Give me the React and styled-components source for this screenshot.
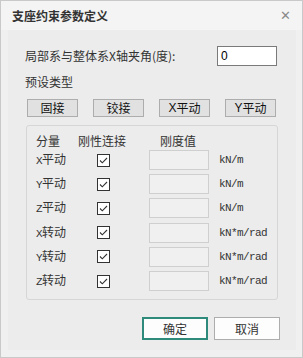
import React from "react";
import styled, { createGlobalStyle } from "styled-components";

const Global = createGlobalStyle`
  html, body { margin: 0; padding: 0; background: #f0f0f0; }
  * { box-sizing: border-box; }
  body { font-family: "Noto Sans CJK SC", "Noto Sans", sans-serif; }
`;

const Window = styled.div`
  width: 303px;
  height: 358px;
  border: 1px solid #c9c9c9;
  background: #f0f0f0;
  display: flex;
  flex-direction: column;
`;

const TitleBar = styled.div`
  height: 29px;
  flex: none;
  background: #f4f4f4;
  display: flex;
  align-items: center;
  justify-content: space-between;
  padding: 0 11px 0 11px;
`;

const Title = styled.div`
  font-size: 12px;
  font-weight: 700;
  color: #333;
  line-height: 1;
  padding-top: 1px;
`;

const Close = styled.div`
  font-family: "DejaVu Sans", sans-serif;
  font-size: 13px;
  color: #8a8a8a;
  line-height: 1;
`;

const Panel = styled.div`
  flex: 1;
  margin: 0 6px 7px 7px;
  background: #ececec;
  padding: 16px 0 0 17px;
  display: flex;
  flex-direction: column;
`;

const AngleRow = styled.div`
  display: flex;
  align-items: center;
  height: 20px;
`;

const Label = styled.span`
  font-size: 12px;
  color: #333;
  line-height: 1;
  white-space: nowrap;
`;

const AngleLabel = styled(Label)`
  width: 192px;
`;

const AngleInput = styled.div`
  width: 60px;
  height: 20px;
  border: 1px solid #7a7a7a;
  background: #fff;
  font-family: "Liberation Sans", sans-serif;
  font-size: 12px;
  color: #000;
  padding: 2px 0 0 3px;
  line-height: 14px;
`;

const SectionLabel = styled(Label)`
  margin-top: 10px;
  height: 12px;
  display: block;
`;

const PresetRow = styled.div`
  display: flex;
  gap: 15px;
  margin-top: 11px;
  padding-left: 2px;
`;

const PresetButton = styled.div`
  width: 51px;
  height: 18px;
  background: #e1e1e1;
  border: 1px solid #adadad;
  display: flex;
  align-items: center;
  justify-content: center;
  font-size: 12px;
  color: #111;
  line-height: 1;
`;

const Latin = styled.span`
  font-family: "Liberation Sans", sans-serif;
  font-size: 12px;
`;

const Group = styled.div`
  margin-top: 8px;
  margin-left: 1px;
  width: 252px;
  height: 175px;
  border: 1px solid #d6d6d6;
  border-radius: 3px;
  padding: 9px 0 0 9px;
  display: flex;
  flex-direction: column;
`;

const HeaderRow = styled.div`
  display: flex;
  height: 12px;
  margin-bottom: 1px;
`;

const HeaderCell = styled(Label)`
  width: ${(p) => p.$w}px;
  flex: none;
`;

const Rows = styled.div`
  display: flex;
  flex-direction: column;
`;

const Row = styled.div`
  display: grid;
  grid-template-columns: 61px 52px 70px auto;
  align-items: center;
  height: 24.2px;
`;

const RowLabel = styled.span`
  font-size: 12px;
  color: #333;
  line-height: 1;
  white-space: nowrap;
  display: flex;
  align-items: baseline;
`;

const Axis = styled.span`
  font-family: "Liberation Mono", monospace;
  font-size: 11px;
  width: 6px;
  display: inline-block;
`;

const Check = styled.div`
  width: 13px;
  height: 13px;
  border: 1px solid #333;
  background: #fff;
  display: flex;
  align-items: center;
  justify-content: center;
`;

const StiffBox = styled.div`
  width: 60px;
  height: 20px;
  border: 1px solid #cfcfcf;
  background: #f0f0f0;
`;

const Unit = styled.span`
  font-family: "Liberation Mono", monospace;
  font-size: 11px;
  letter-spacing: -0.6px;
  color: #333;
`;

const Footer = styled.div`
  display: flex;
  gap: 6px;
  margin-top: 17px;
  padding-left: 117px;
`;

const DialogButton = styled.div`
  width: 66px;
  height: 23px;
  background: #fdfdfd;
  border: ${(p) => (p.$primary ? "2px solid #2e8b7b" : "1px solid #adadad")};
  display: flex;
  align-items: center;
  justify-content: center;
  font-size: 12px;
  color: #333;
  line-height: 1;
`;

const CheckMark = () => (
  <svg width="11" height="11" viewBox="0 0 11 11">
    <path d="M2 5.5 L4.3 7.8 L9 3" fill="none" stroke="#333" strokeWidth="1.1" />
  </svg>
);

const rows = [
  ["X", "平动", "kN/m"],
  ["Y", "平动", "kN/m"],
  ["Z", "平动", "kN/m"],
  ["X", "转动", "kN*m/rad"],
  ["Y", "转动", "kN*m/rad"],
  ["Z", "转动", "kN*m/rad"],
];

export default function App() {
  return (
    <>
      <Global />
      <Window>
        <TitleBar>
          <Title>支座约束参数定义</Title>
          <Close>✕</Close>
        </TitleBar>
        <Panel>
          <AngleRow>
            <AngleLabel>局部系与整体系X轴夹角(度):</AngleLabel>
            <AngleInput>0</AngleInput>
          </AngleRow>
          <SectionLabel>预设类型</SectionLabel>
          <PresetRow>
            <PresetButton>固接</PresetButton>
            <PresetButton>铰接</PresetButton>
            <PresetButton>
              <Latin>X</Latin>平动
            </PresetButton>
            <PresetButton>
              <Latin>Y</Latin>平动
            </PresetButton>
          </PresetRow>
          <Group>
            <HeaderRow>
              <HeaderCell $w={42}>分量</HeaderCell>
              <HeaderCell $w={82}>刚性连接</HeaderCell>
              <HeaderCell $w={60}>刚度值</HeaderCell>
            </HeaderRow>
            <Rows>
              {rows.map(([a, n, u], i) => (
                <Row key={i}>
                  <RowLabel>
                    <Axis>{a}</Axis>
                    {n}
                  </RowLabel>
                  <Check>
                    <CheckMark />
                  </Check>
                  <StiffBox />
                  <Unit>{u}</Unit>
                </Row>
              ))}
            </Rows>
          </Group>
          <Footer>
            <DialogButton $primary>确定</DialogButton>
            <DialogButton>取消</DialogButton>
          </Footer>
        </Panel>
      </Window>
    </>
  );
}
